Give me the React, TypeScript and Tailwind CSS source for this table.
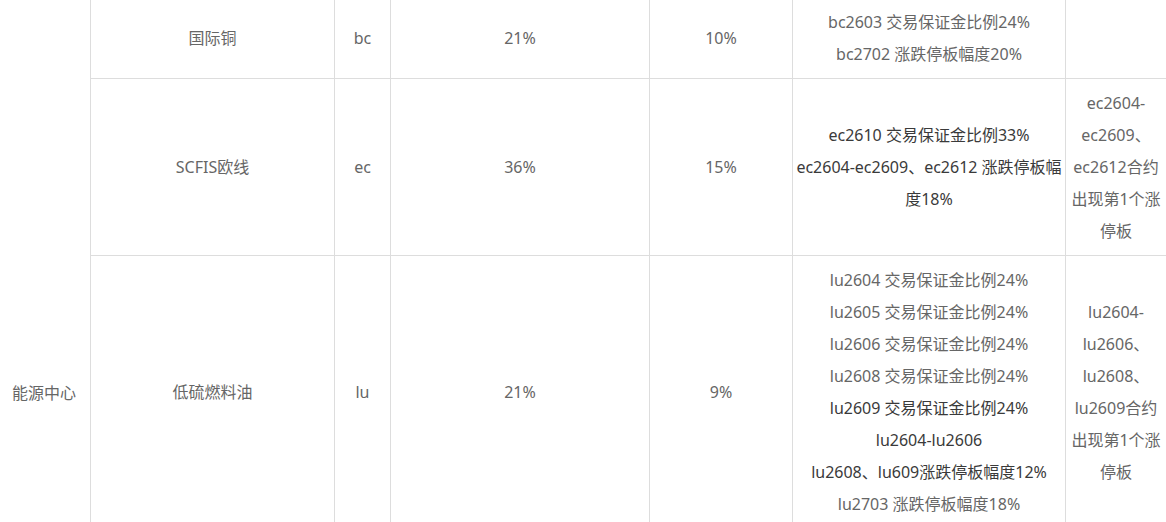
import React from 'react';

type Line = { text: string; dark?: boolean };

const rows: {
  name: string;
  code: string;
  margin: string;
  limit: string;
  notes: Line[];
  trigger: string[];
}[] = [
  {
    name: '国际铜',
    code: 'bc',
    margin: '21%',
    limit: '10%',
    notes: [
      { text: 'bc2603 交易保证金比例24%' },
      { text: 'bc2702 涨跌停板幅度20%' },
    ],
    trigger: [],
  },
  {
    name: 'SCFIS欧线',
    code: 'ec',
    margin: '36%',
    limit: '15%',
    notes: [
      { text: 'ec2610 交易保证金比例33%', dark: true },
      { text: 'ec2604-ec2609、ec2612 涨跌停板幅', dark: true },
      { text: '度18%', dark: true },
    ],
    trigger: ['ec2604-', 'ec2609、', 'ec2612合约', '出现第1个涨', '停板'],
  },
  {
    name: '低硫燃料油',
    code: 'lu',
    margin: '21%',
    limit: '9%',
    notes: [
      { text: 'lu2604 交易保证金比例24%' },
      { text: 'lu2605 交易保证金比例24%' },
      { text: 'lu2606 交易保证金比例24%' },
      { text: 'lu2608 交易保证金比例24%' },
      { text: 'lu2609 交易保证金比例24%', dark: true },
      { text: 'lu2604-lu2606', dark: true },
      { text: 'lu2608、lu609涨跌停板幅度12%', dark: true },
      { text: 'lu2703 涨跌停板幅度18%' },
    ],
    trigger: ['lu2604-', 'lu2606、', 'lu2608、', 'lu2609合约', '出现第1个涨', '停板'],
  },
];

const cell = 'border border-[#dddddd] text-center align-middle py-2';

export default function App() {
  return (
    <div className="w-full h-[522px] overflow-hidden bg-white font-['Noto_Sans','Noto_Sans_CJK_SC',sans-serif] text-base leading-8 text-[#666666]">
      <table className="-ml-px -mt-[3px] w-[1167px] table-fixed border-collapse">
        <colgroup>
          <col className="w-[91px]" />
          <col className="w-[244px]" />
          <col className="w-[56px]" />
          <col className="w-[259px]" />
          <col className="w-[143px]" />
          <col className="w-[273px]" />
          <col className="w-[101px]" />
        </colgroup>
        <tbody>
          {rows.map((r, i) => (
            <tr key={r.code}>
              {i === 0 && (
                <td
                  rowSpan={rows.length}
                  className="border border-[#dddddd] border-t-0 align-top pt-[379px] pl-[12px] text-left"
                >
                  能源中心
                </td>
              )}
              <td className={cell}>{r.name}</td>
              <td className={cell}>{r.code}</td>
              <td className={cell}>{r.margin}</td>
              <td className={cell}>{r.limit}</td>
              <td className={`${cell} px-0`}>
                {r.notes.map((n) => (
                  <div
                    key={n.text}
                    className={`whitespace-nowrap ${n.dark ? 'text-[#3a3a3a]' : ''}`}
                  >
                    {n.text}
                  </div>
                ))}
              </td>
              <td className={`${cell} px-0.5`}>
                {r.trigger.map((t) => (
                  <div key={t} className="whitespace-nowrap">
                    {t}
                  </div>
                ))}
              </td>
            </tr>
          ))}
        </tbody>
      </table>
    </div>
  );
}
